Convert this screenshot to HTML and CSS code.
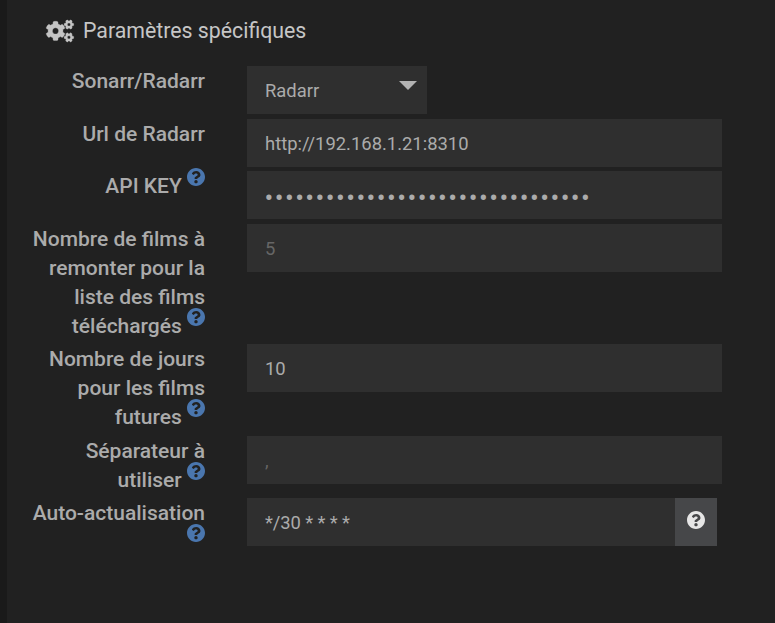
FILE: index.html
```html
<!DOCTYPE html>
<html lang="fr">
<head>
<meta charset="utf-8">
<title>Paramètres spécifiques</title>
<link rel="stylesheet" href="styles.css">
</head>
<body>
<svg class="defs" aria-hidden="true">
  <symbol id="help" viewBox="8 8 496 496"><path d="M504 256c0 136.997-111.043 248-248 248S8 392.997 8 256C8 119.083 119.043 8 256 8s248 111.083 248 248zM262.655 90c-54.497 0-89.255 22.957-116.549 63.758-3.536 5.286-2.353 12.415 2.715 16.258l34.699 26.31c5.205 3.947 12.621 3.008 16.665-2.122 17.864-22.658 30.113-35.797 57.303-35.797 20.429 0 45.698 13.148 45.698 32.958 0 14.976-12.363 22.667-32.534 33.976C247.128 238.528 216 254.941 216 296v4c0 6.627 5.373 12 12 12h56c6.627 0 12-5.373 12-12v-1.333c0-28.462 83.186-29.647 83.186-106.667 0-58.002-60.165-102-116.531-102zM256 338c-25.365 0-46 20.635-46 46 0 25.364 20.635 46 46 46s46-20.636 46-46c0-25.364-20.635-46-46-46z"/></symbol>
  <path id="small-gear" d="M512.1 191l-8.2 14.3c-3 5.3-9.4 7.5-15.1 5.4-11.8-4.4-22.6-10.7-32.1-18.6-4.6-3.8-5.8-10.5-2.8-15.7l8.2-14.3c-6.9-8-12.3-17.3-15.9-27.4h-16.5c-6 0-11.2-4.3-12.2-10.3-2-12-2.1-24.6 0-37.1 1-6 6.2-10.4 12.2-10.4h16.5c3.6-10.1 9-19.4 15.9-27.4l-8.2-14.3c-3-5.2-1.9-11.9 2.8-15.7 9.5-7.9 20.4-14.2 32.1-18.6 5.7-2.1 12.1.1 15.1 5.4l8.2 14.3c10.5-1.9 21.2-1.9 31.7 0L552 6.3c3-5.3 9.4-7.5 15.1-5.4 11.8 4.4 22.6 10.7 32.1 18.6 4.6 3.8 5.8 10.5 2.8 15.7l-8.2 14.3c6.9 8 12.3 17.3 15.9 27.4h16.5c6 0 11.2 4.3 12.2 10.3 2 12 2.1 24.6 0 37.1-1 6-6.2 10.4-12.2 10.4h-16.5c-3.6 10.1-9 19.4-15.9 27.4l8.2 14.3c3 5.2 1.9 11.9-2.8 15.7-9.5 7.9-20.4 14.2-32.1 18.6-5.7 2.1-12.1-.1-15.1-5.4l-8.2-14.3c-10.4 1.9-21.2 1.9-31.7 0zm-10.5-58.8c38.5 29.6 82.4-14.3 52.8-52.8-38.5-29.7-82.4 14.3-52.8 52.8z"/>
</svg>
<main class="panel">
  <h1 class="title">
    <svg class="cogs" viewBox="0 0 640 512"><use href="#small-gear"/><use href="#small-gear" y="298.9"/><path d="M386.3 286.1l33.7 16.8c10.1 5.8 14.5 18.1 10.5 29.1-8.9 24.2-26.4 46.4-42.6 65.8-7.4 8.9-20.2 11.1-30.3 5.3l-29.1-16.8c-16 13.7-34.6 24.6-54.9 31.7v33.6c0 11.6-8.3 21.6-19.7 23.6-24.6 4.2-50.4 4.4-75.9 0-11.5-2-20-11.9-20-23.6V418c-20.3-7.2-38.9-18-54.9-31.7L74 403c-10 5.8-22.9 3.6-30.3-5.3-16.2-19.4-33.3-41.6-42.2-65.7-4-10.9.4-23.2 10.5-29.1l33.3-16.8c-3.9-20.9-3.9-42.4 0-63.4L12 205.8c-10.1-5.8-14.6-18.1-10.5-29 8.9-24.2 26-46.4 42.2-65.8 7.4-8.9 20.2-11.1 30.3-5.3l29.1 16.8c16-13.7 34.6-24.6 54.9-31.7V57.1c0-11.5 8.2-21.5 19.6-23.5 24.6-4.2 50.5-4.4 76-.1 11.5 2 20 11.9 20 23.6v33.6c20.3 7.2 38.9 18 54.9 31.7l29.1-16.8c10-5.8 22.9-3.6 30.3 5.3 16.2 19.4 33.2 41.6 42.1 65.8 4 10.9.1 23.2-10 29.1l-33.7 16.8c3.9 21 3.9 42.5 0 63.5zm-117.6 21.1c59.2-77-28.7-164.9-105.7-105.7-59.2 77 28.7 164.9 105.7 105.7z"/></svg>
    <span>Paramètres spécifiques</span>
  </h1>
  <form class="form">
    <div class="row r1"><div class="label">Sonarr/Radarr</div><div class="field select"><span>Radarr</span><i class="caret"></i></div></div>
    <div class="row r2"><div class="label">Url de Radarr</div><div class="field url">http://192.168.1.21:8310</div></div>
    <div class="row r3"><div class="label">API KEY <svg class="help"><use href="#help"/></svg></div><div class="field password">••••••••••••••••••••••••••••••••</div></div>
    <div class="row r4"><div class="label">Nombre de films à<br>remonter pour la<br>liste des films<br>téléchargés <svg class="help"><use href="#help"/></svg></div><div class="field placeholder">5</div></div>
    <div class="row r5"><div class="label">Nombre de jours<br>pour les films<br>futures <svg class="help"><use href="#help"/></svg></div><div class="field">10</div></div>
    <div class="row r6"><div class="label">Séparateur à<br>utiliser <svg class="help"><use href="#help"/></svg></div><div class="field placeholder">,</div></div>
    <div class="row r7"><div class="label">Auto-actualisation<br><svg class="help"><use href="#help"/></svg></div><div class="group"><div class="field cron">*/30 * * * *</div><div class="addon"><svg class="help"><use href="#help"/></svg></div></div></div>
  </form>
</main>
</body>
</html>
```
FILE: styles.css
```css
* { box-sizing: border-box; }
body {
  margin: 0;
  height: 623px;
  padding-left: 7px;
  overflow: hidden;
  background: #1a1a1a;
  font-family: Roboto, "Liberation Sans", sans-serif;
  color: #b3b3b3;
}
.defs { display: none; }
.panel { height: 623px; background: #212121; }
.title {
  display: flex;
  align-items: center;
  gap: 9px;
  height: 66px;
  margin: 0;
  padding: 0 0 4px 39px;
  font-size: 21.3px;
  line-height: 26px;
  font-weight: 400;
  color: #c6c6c6;
}
.cogs {
  width: 28px;
  height: 22px;
  margin-top: -1px;
  fill: #c4c4c4;
  stroke: #c4c4c4;
  stroke-width: 8;
  overflow: visible;
}
.row {
  display: grid;
  grid-template-columns: 198px 475px;
  column-gap: 42px;
  align-items: start;
}
.r1, .r3 { height: 53px; }
.r2 { height: 52px; }
.r4 { height: 120px; }
.r5 { height: 92px; }
.r6 { height: 62px; }
.label {
  padding-top: 1px;
  text-align: right;
  font-size: 21px;
  font-weight: 500;
  line-height: 29px;
  color: #ababab;
}
.help {
  display: inline-block;
  width: 18px;
  height: 18px;
  vertical-align: 7px;
  margin: -12px 0 0;
  fill: #4a76ae;
}
.field {
  height: 48px;
  padding-left: 18px;
  background: #2f2f2f;
  font-size: 18.4px;
  line-height: 49px;
  color: #ababab;
  white-space: nowrap;
}
.select {
  display: flex;
  justify-content: space-between;
  width: 180px;
  padding-right: 10px;
}
.caret {
  margin-top: 15px;
  width: 18px;
  height: 9px;
  background: #b3b3b3;
  clip-path: polygon(0 0, 100% 0, 50% 100%);
}
.password {
  padding-left: 17.5px;
  font-size: 26px;
  line-height: 55px;
  letter-spacing: 1.44px;
}
.placeholder { color: #666; }
.group { display: flex; width: 470px; }
.cron { flex: 1; letter-spacing: -0.1px; }
.addon {
  width: 42px;
  height: 48px;
  display: flex;
  align-items: center;
  justify-content: center;
  padding-bottom: 4px;
  background: #464749;
}
.addon .help { margin: 0; fill: #e6e6e6; }
```
